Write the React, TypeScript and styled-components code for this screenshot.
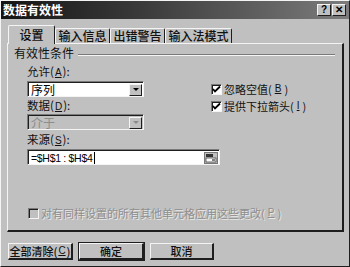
import styled, { createGlobalStyle } from "styled-components";

const GlobalStyle = createGlobalStyle`
  html, body {
    margin: 0;
    padding: 0;
    background: #c0c0c0;
  }
  body {
    font-family: "Noto Sans CJK SC", "Liberation Sans", sans-serif;
    font-size: 11px;
    line-height: 14px;
    color: #111;
  }
`;

const face = "#c0c0c0";
const light = "#f4f4f4";
const shadow = "#7a7a7a";
const dark = "#1e1e1e";

const Dialog = styled.div`
  width: 350px;
  height: 267px;
  box-sizing: border-box;
  background: ${face};
  border-top: 1px solid ${light};
  border-left: 1px solid ${light};
  border-right: 1px solid ${dark};
  border-bottom: 1px solid ${dark};
  display: flex;
  flex-direction: column;
  overflow: hidden;
`;

const TitleBar = styled.div`
  height: 18px;
  display: flex;
  align-items: center;
  padding: 0 3px 0 2px;
  background: linear-gradient(to right, #141414 0%, #3a3a3a 40%, #7c7c7c 100%);
  color: #fff;
  font-weight: bold;
  font-size: 12px;

  span {
    flex: 1;
  }
`;

const TitleButton = styled.div`
  width: 14px;
  height: 12px;
  margin-left: 1px;
  box-sizing: border-box;
  background: ${face};
  border-top: 1px solid ${light};
  border-left: 1px solid ${light};
  border-right: 1px solid ${dark};
  border-bottom: 1px solid ${dark};
  display: flex;
  align-items: center;
  justify-content: center;
  color: #000;
  font-family: "Liberation Sans", sans-serif;
  font-weight: bold;
  font-size: 10px;
  line-height: 1;
`;

const Body = styled.div`
  flex: 1;
  display: flex;
  flex-direction: column;
  padding: 6px 6px 0 6px;
`;

const TabRow = styled.div`
  display: flex;
  align-items: flex-end;
  height: 18px;
  padding-left: 1px;
  position: relative;
  z-index: 1;
`;

const Tab = styled.div<{ $active?: boolean; $w: number }>`
  width: ${(p) => p.$w}px;
  height: ${(p) => (p.$active ? 19 : 15)}px;
  box-sizing: border-box;
  display: flex;
  align-items: center;
  justify-content: center;
  background: ${face};
  border-top: 1px solid ${light};
  border-left: 1px solid ${light};
  border-right: 1px solid ${dark};
  border-top-left-radius: 2px;
  border-top-right-radius: 2px;
  margin-bottom: ${(p) => (p.$active ? -1 : 0)}px;
  font-size: 12px;
  font-weight: 500;
  white-space: nowrap;
`;

const Panel = styled.div`
  width: 337px;
  height: 189px;
  box-sizing: border-box;
  border-top: 1px solid ${light};
  border-left: 1px solid ${light};
  border-right: 2px solid ${dark};
  border-bottom: 2px solid ${dark};
  padding: 2px 7px 0 6px;
  display: flex;
  flex-direction: column;
`;

const GroupTitle = styled.div`
  display: flex;
  align-items: center;
  height: 14px;
  gap: 4px;
  font-size: 12px;

  &::after {
    content: "";
    flex: 1;
    height: 0;
    border-top: 1px solid ${shadow};
    border-bottom: 1px solid ${light};
    margin-top: 3px;
  }
`;

const FieldsGrid = styled.div`
  display: grid;
  grid-template-columns: 184px 1fr;
  padding-left: 13px;
  margin-top: 4px;
`;

const Column = styled.div`
  display: flex;
  flex-direction: column;
`;

const Label = styled.div<{ $gap?: number; $top?: number }>`
  height: 14px;
  line-height: 14px;
  font-size: 11.5px;
  margin-top: ${(p) => p.$top ?? 0}px;
  margin-bottom: ${(p) => p.$gap ?? 3}px;
  white-space: nowrap;
`;

const Sunken = styled.div<{ $w: number; $disabled?: boolean }>`
  width: ${(p) => p.$w}px;
  height: 16px;
  box-sizing: border-box;
  display: flex;
  align-items: center;
  border-top: 1px solid ${shadow};
  border-left: 1px solid ${shadow};
  border-right: 1px solid ${light};
  border-bottom: 1px solid ${light};
  box-shadow: inset 1px 1px 0 ${dark};
  background: ${(p) => (p.$disabled ? face : "#fff")};
  color: ${(p) => (p.$disabled ? "#8c8c8c" : "#000")};
  padding: 1px 1px 0 3px;
  font-size: 12px;
  line-height: 12px;
`;

const Value = styled.span`
  flex: 1;
  white-space: nowrap;
  display: flex;
  align-items: center;
  line-height: 12px;
`;

const Formula = styled.span`
  font-family: "Liberation Sans", sans-serif;
  font-size: 10.5px;
  letter-spacing: -0.3px;
`;

const Caret = styled.span`
  width: 1px;
  height: 12px;
  background: #000;
  margin-left: 1px;
`;

const DropButton = styled.div<{ $disabled?: boolean }>`
  width: 13px;
  height: 12px;
  box-sizing: border-box;
  background: ${face};
  border-top: 1px solid ${light};
  border-left: 1px solid ${light};
  border-right: 1px solid ${dark};
  border-bottom: 1px solid ${dark};
  display: flex;
  align-items: center;
  justify-content: center;

  &::after {
    content: "";
    border-left: 3px solid transparent;
    border-right: 3px solid transparent;
    border-top: 3px solid ${(p) => (p.$disabled ? "#8a8a8a" : "#000")};
  }
`;

const Checks = styled.div`
  display: flex;
  flex-direction: column;
  gap: 5px;
  padding-top: 19px;
`;

const CheckRow = styled.div<{ $disabled?: boolean }>`
  display: flex;
  align-items: center;
  gap: 2px;
  height: 12px;
  font-size: 11px;
  white-space: nowrap;
  color: ${(p) => (p.$disabled ? "#8e8e8e" : "#111")};
  text-shadow: ${(p) => (p.$disabled ? "1px 1px 0 #e8e8e8" : "none")};
`;

const Box = styled.div<{ $disabled?: boolean }>`
  width: 11px;
  height: 11px;
  flex-shrink: 0;
  box-sizing: border-box;
  border-top: 1px solid ${shadow};
  border-left: 1px solid ${shadow};
  border-right: 1px solid ${light};
  border-bottom: 1px solid ${light};
  box-shadow: inset 1px 1px 0 ${dark};
  background: ${(p) => (p.$disabled ? face : "#fff")};
  display: flex;
  align-items: center;
  justify-content: center;
`;

const Source = styled.div`
  padding-left: 13px;
  display: flex;
  flex-direction: column;
`;

const Accel = styled.span`
  text-decoration: underline;
  font-family: "Liberation Sans", sans-serif;
  font-size: 10px;
  margin: 0 1px;
`;

const BottomCheck = styled.div`
  margin-top: auto;
  margin-bottom: 11px;
  padding-left: 14px;
`;

const ButtonRow = styled.div`
  display: flex;
  align-items: center;
  margin-top: 11px;
  padding-left: 1px;
`;

const Button = styled.div<{ $w: number; $default?: boolean }>`
  width: ${(p) => p.$w}px;
  height: 17px;
  box-sizing: border-box;
  display: flex;
  align-items: center;
  justify-content: center;
  background: ${face};
  border-top: 1px solid ${light};
  border-left: 1px solid ${light};
  border-right: 2px solid ${dark};
  border-bottom: 2px solid ${dark};
  outline: ${(p) => (p.$default ? `1px solid ${dark}` : "none")};
  font-size: 11px;
  font-weight: 500;
  white-space: nowrap;
  margin-left: auto;

  &:first-child {
    margin-left: 0;
  }

  & + & {
    margin-left: 6px;
  }
`;

const Check = () => (
  <svg width="9" height="9" viewBox="0 0 9 9">
    <path d="M1 4 L3 6.5 L8 1.5" stroke="#000" strokeWidth="1.8" fill="none" />
  </svg>
);

const RefButton = () => (
  <svg width="14" height="12" viewBox="0 0 14 12">
    <rect x="0.5" y="0.5" width="13" height="11" fill="#c0c0c0" stroke="#777" />
    <rect x="2" y="2" width="7" height="3" fill="#333" />
    <rect x="2" y="6" width="10" height="4" fill="#fff" stroke="#444" strokeWidth="0.8" />
    <path d="M8 8 L11 8" stroke="#000" />
  </svg>
);

const App = () => {
  return (
    <>
      <GlobalStyle />
      <Dialog>
        <TitleBar>
          <span>数据有效性</span>
          <TitleButton>?</TitleButton>
          <TitleButton>✕</TitleButton>
        </TitleBar>
        <Body>
          <TabRow>
            <Tab $active $w={47}>设置</Tab>
            <Tab $w={55}>输入信息</Tab>
            <Tab $w={55}>出错警告</Tab>
            <Tab $w={67}>输入法模式</Tab>
          </TabRow>
          <Panel>
            <GroupTitle>有效性条件</GroupTitle>
            <FieldsGrid>
              <Column>
                <Label>
                  允许(<Accel>A</Accel>):
                </Label>
                <Sunken $w={117}>
                  <Value>序列</Value>
                  <DropButton />
                </Sunken>
                <Label $gap={2} $top={1}>
                  数据(<Accel>D</Accel>):
                </Label>
                <Sunken $w={117} $disabled>
                  <Value>介于</Value>
                  <DropButton $disabled />
                </Sunken>
              </Column>
              <Checks>
                <CheckRow>
                  <Box>
                    <Check />
                  </Box>
                  忽略空值(<Accel>B</Accel>)
                </CheckRow>
                <CheckRow>
                  <Box>
                    <Check />
                  </Box>
                  提供下拉箭头(<Accel>I</Accel>)
                </CheckRow>
              </Checks>
            </FieldsGrid>
            <Source>
              <Label $gap={3} $top={2}>
                来源(<Accel>S</Accel>):
              </Label>
              <Sunken $w={193}>
                <Value>
                  <Formula>=$H$1 : $H$4</Formula>
                  <Caret />
                </Value>
                <RefButton />
              </Sunken>
            </Source>
            <BottomCheck>
              <CheckRow $disabled>
                <Box $disabled />
                对有同样设置的所有其他单元格应用这些更改(<Accel>P</Accel>)
              </CheckRow>
            </BottomCheck>
          </Panel>
          <ButtonRow>
            <Button $w={65}>
              全部清除(<Accel>C</Accel>)
            </Button>
            <Button $w={65} $default>
              确定
            </Button>
            <Button $w={64}>取消</Button>
          </ButtonRow>
        </Body>
      </Dialog>
    </>
  );
};

export default App;
